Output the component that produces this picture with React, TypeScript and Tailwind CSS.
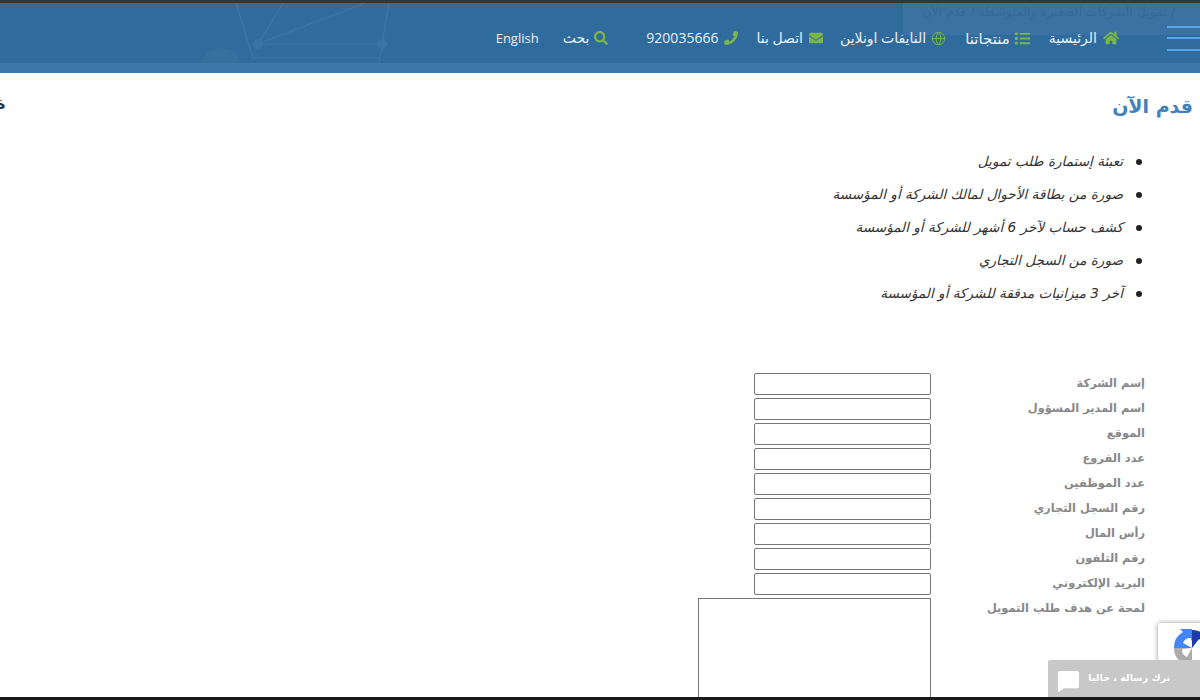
import { FaHome, FaList, FaEnvelope, FaPhone, FaSearch } from "react-icons/fa";
import { Globe } from "lucide-react";

const documents = [
  "تعبئة إستمارة طلب تمويل",
  "صورة من بطاقة الأحوال لمالك الشركة أو المؤسسة",
  "كشف حساب لآخر 6 أشهر للشركة أو المؤسسة",
  "صورة من السجل التجاري",
  "آخر 3 ميزانيات مدققة للشركة أو المؤسسة",
];

const fields = [
  "إسم الشركة",
  "اسم المدير المسؤول",
  "الموقع",
  "عدد الفروع",
  "عدد الموظفين",
  "رقم السجل التجاري",
  "رأس المال",
  "رقم التلفون",
  "البريد الإلكتروني",
];

function Header() {
  return (
    <header className="relative h-[73px] shrink-0 overflow-hidden border-t-[3px] border-[#33373a] bg-[#306b9e]">
      {/* faint network picture behind the bar */}
      <svg className="absolute left-0 top-0 h-[60px] w-[520px]" viewBox="0 0 520 60" fill="none" stroke="#3a74a5" strokeWidth="1.5">
        <path d="M236 0 L253 55 L380 55 M258 41 L382 41 M258 41 L365 0 M258 41 L283 0 M382 41 L389 0 M379 60 L382 41" />
        <circle cx="258" cy="41" r="5" fill="#3a74a5" stroke="none" />
        <circle cx="382" cy="41" r="5" fill="#3a74a5" stroke="none" />
        <circle cx="221" cy="66" r="21" fill="#36709f" stroke="none" />
      </svg>
      {/* breadcrumb strip sitting behind the nav */}
      <div className="absolute right-0 top-0 h-[32px] w-[297px] overflow-hidden whitespace-nowrap bg-[#3a72a4] pr-[25px] pt-[1px] text-[12.5px] leading-[16px] text-[#35699b]" dir="rtl">
        / تمويل الشركات الصغيرة والمتوسطة / قدم الآن
      </div>

      <div className="relative flex h-[60px] items-center pt-[10px]" dir="rtl">
        <div className="flex w-[33px] shrink-0 flex-col gap-[9.5px]">
          <span className="h-[2px] w-full bg-[#56a5e6]" />
          <span className="h-[2px] w-full bg-[#56a5e6]" />
          <span className="h-[2px] w-full bg-[#56a5e6]" />
        </div>
        <nav className="mr-[48px] flex items-center text-[14px] leading-[22px] text-[#e8eff5] [font-family:'Open_Sans','DejaVu_Sans',sans-serif]">
          <a className="flex items-center gap-[6px]">
            <FaHome className="text-[16px] text-[#7ab648]" />
            <span>الرئيسية</span>
          </a>
          <a className="mr-[19px] flex items-center gap-[5px]">
            <FaList className="text-[15px] text-[#7ab648]" />
            <span className="text-[15px]">منتجاتنا</span>
          </a>
          <a className="mr-[19px] flex items-center gap-[5px]">
            <Globe size={15} strokeWidth={1.5} className="text-[#7ab648]" />
            <span>النايفات اونلاين</span>
          </a>
          <a className="mr-[17px] flex items-center gap-[6px]">
            <FaEnvelope className="text-[14px] text-[#7ab648]" />
            <span>اتصل بنا</span>
          </a>
          <a className="mr-[18px] flex items-center gap-[6px]">
            <FaPhone className="text-[14px] text-[#7ab648]" />
            <span dir="ltr">920035666</span>
          </a>
          <a className="mr-[38px] flex items-center gap-[5px]">
            <FaSearch className="text-[14px] text-[#7ab648]" />
            <span>بحث</span>
          </a>
          <a className="mr-[24px] text-[13px]" dir="ltr">English</a>
        </nav>
      </div>
      <div className="relative h-[10px] bg-[#3d76a8]" />
    </header>
  );
}

export default function App() {
  return (
    <div className="relative h-[700px] w-[1200px] overflow-hidden bg-white [font-family:'DejaVu_Sans',sans-serif]" dir="rtl">
      <Header />

      <main className="flex flex-col">
        <div className="relative pr-[7px] pt-[18px]">
          <h2 className="text-[19px] font-bold leading-[30px] text-[#4182bd]">قدم الآن</h2>
          <span className="absolute -left-[4px] top-[19px] text-[16px] font-bold text-[#27305a]">ة</span>
        </div>

        <ul className="mt-[24px] flex flex-col pr-[58px] text-[13.6px] italic leading-[33px] text-[#333]">
          {documents.map((doc) => (
            <li key={doc} className="flex items-center gap-[13px]">
              <span className="h-[6px] w-[6px] shrink-0 rounded-full bg-[#222]" />
              <span>{doc}</span>
            </li>
          ))}
        </ul>

        <form className="mt-[63px] flex flex-col gap-[3px] pr-[55px]">
          {fields.map((label) => (
            <div key={label} className="flex h-[22px] items-center">
              <label className="w-[214px] shrink-0 pb-[1px] text-[11.4px] font-bold text-[#888]">{label}</label>
              <input className="h-[22px] w-[177px] rounded-[2px] border border-[#767676] bg-white" />
            </div>
          ))}
          <div className="flex items-start">
            <label className="w-[214px] shrink-0 pt-[2px] text-[11.4px] font-bold text-[#888]">لمحة عن هدف طلب التمويل</label>
            <textarea className="h-[102px] w-[233px] resize-none border border-[#767676] bg-white" />
          </div>
        </form>
      </main>

      {/* recaptcha badge, cut off by the window edge */}
      <div className="absolute left-[1158px] top-[623px] h-[60px] w-[60px] overflow-hidden rounded-[2px] bg-white shadow-[0_0_5px_rgba(120,120,120,0.8)]">
        <svg className="absolute left-[15px] top-[6px] h-[38px] w-[38px]" viewBox="0 0 38 38">
          <path d="M19 19 L19 1 A18 18 0 0 1 37 19 Z" fill="#1c3aa9" />
          <path d="M19 19 L1 19 A18 18 0 0 1 10 3 L7 0 L19 0 L19 12 L16 9 Z" fill="#4285f4" />
          <path d="M19 19 L1 19 A18 18 0 0 0 19 37 Z" fill="#ababab" />
          <path d="M19 19 L26 10 A8 8 0 0 1 29 19 Z M19 19 L10 14 A8 8 0 0 1 18 9 Z M19 19 L9 20 A8 8 0 0 0 14 28 Z M19 19 L20 29 A8 8 0 0 0 28 23 Z" fill="#fff" />
        </svg>
      </div>

      {/* chat tab */}
      <div className="absolute bottom-[3px] left-[1048px] flex h-[37px] w-[152px] items-center justify-between rounded-tl-[2px] bg-[#c8c8c8] pl-[9px] pr-[30px] text-[9.6px] font-bold text-white">
        <span className="whitespace-nowrap">ترك رسالة ، حاليا</span>
        <svg className="mt-[5px] h-[23px] w-[23px]" viewBox="0 0 24 24" fill="#fff">
          <path d="M3 1 H21 A2 2 0 0 1 23 3 V17 A2 2 0 0 1 21 19 H7 L2 23 A1 1 0 0 1 1 22 V3 A2 2 0 0 1 3 1 Z" />
        </svg>
      </div>

      <div className="absolute bottom-0 left-0 h-[3px] w-full bg-[#1a1a1a]" />
    </div>
  );
}
